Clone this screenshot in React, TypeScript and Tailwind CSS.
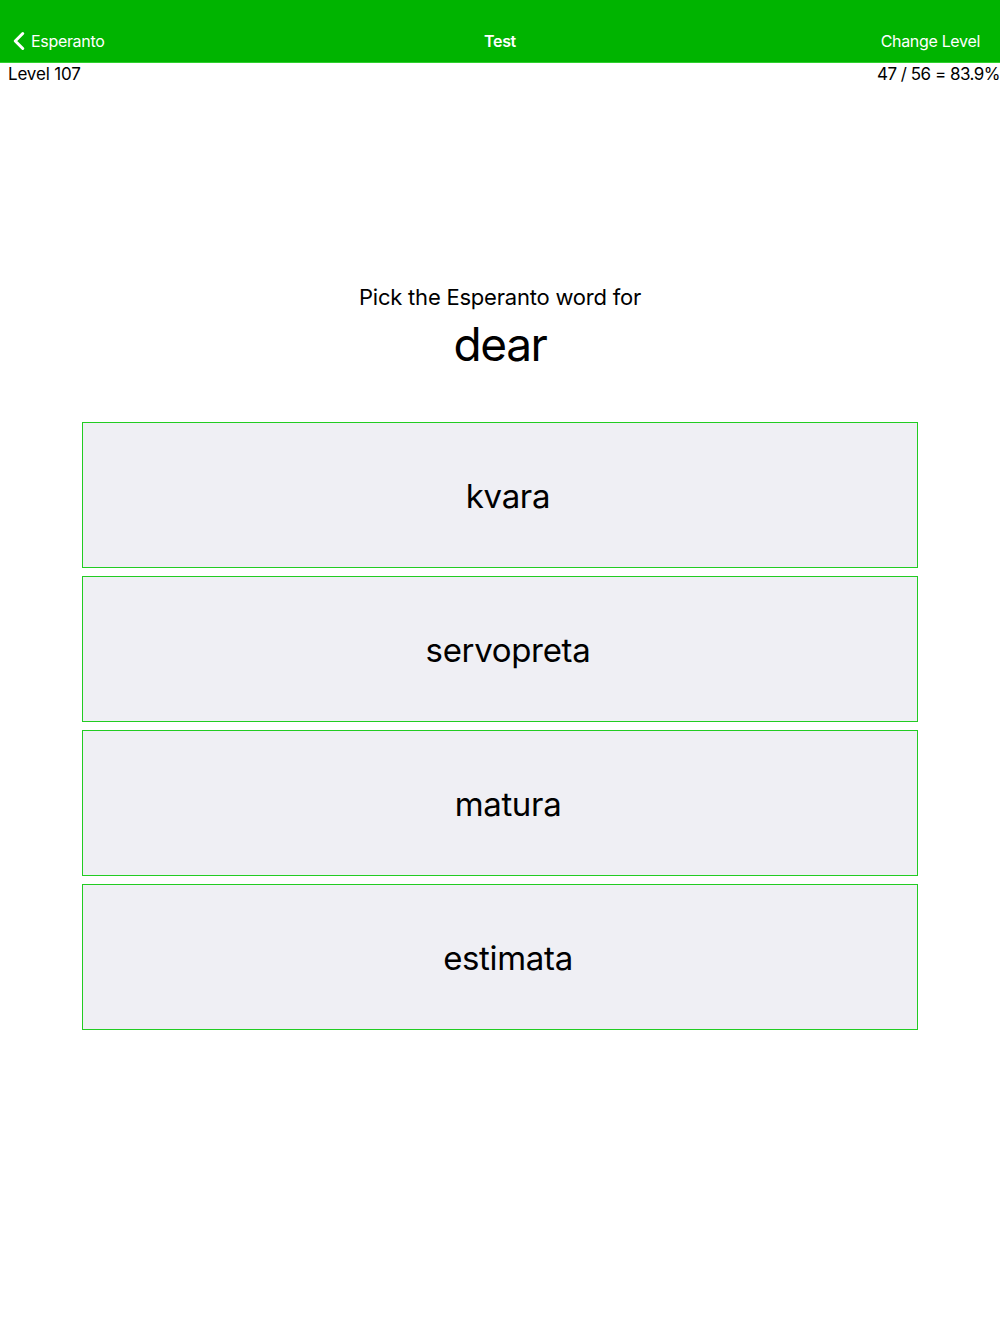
import { ChevronLeft } from "lucide-react";

const choices = ["kvara", "servopreta", "matura", "estimata"];

export default function App() {
  return (
    <div
      className="w-[1000px] h-[1334px] bg-white text-black"
      style={{ fontFamily: "Inter, 'Liberation Sans', sans-serif" }}
    >
      <div className="h-[63px] bg-[#00b400] border-b border-[#2ed02e] pt-[26px] px-[10px] text-white text-[16px] leading-[22px] tracking-[-0.02em]">
        <div className="grid grid-cols-3 items-center h-[30px]">
          <div className="flex items-center">
            <ChevronLeft className="w-[30px] h-[30px] -ml-[6px]" strokeWidth={2.4} />
            <span className="-ml-[3px]">Esperanto</span>
          </div>
          <div className="text-center font-semibold">Test</div>
          <div className="text-right pr-[10px]">Change Level</div>
        </div>
      </div>

      <div className="flex justify-between text-[17px] leading-[22px] pl-[8px] tracking-[-0.01em]">
        <span>Level 107</span>
        <span className="tracking-[-0.03em]">47 / 56 = 83.9%</span>
      </div>

      <div className="flex flex-col items-center mt-[198px]">
        <div className="text-[22px] leading-[28px] tracking-[-0.01em]">Pick the Esperanto word for</div>
        <div className="text-[46px] leading-[58px] mt-[4px] tracking-[-0.03em]">dear</div>
      </div>

      <div className="flex flex-col gap-[8px] px-[82px] mt-[49px]">
        {choices.map((c) => (
          <button
            key={c}
            className="h-[146px] bg-[#efeff4] border border-[#22cc22] flex items-center justify-center pl-[16px] pt-[3px] text-[33px] tracking-[-0.01em]"
          >
            {c}
          </button>
        ))}
      </div>
    </div>
  );
}
